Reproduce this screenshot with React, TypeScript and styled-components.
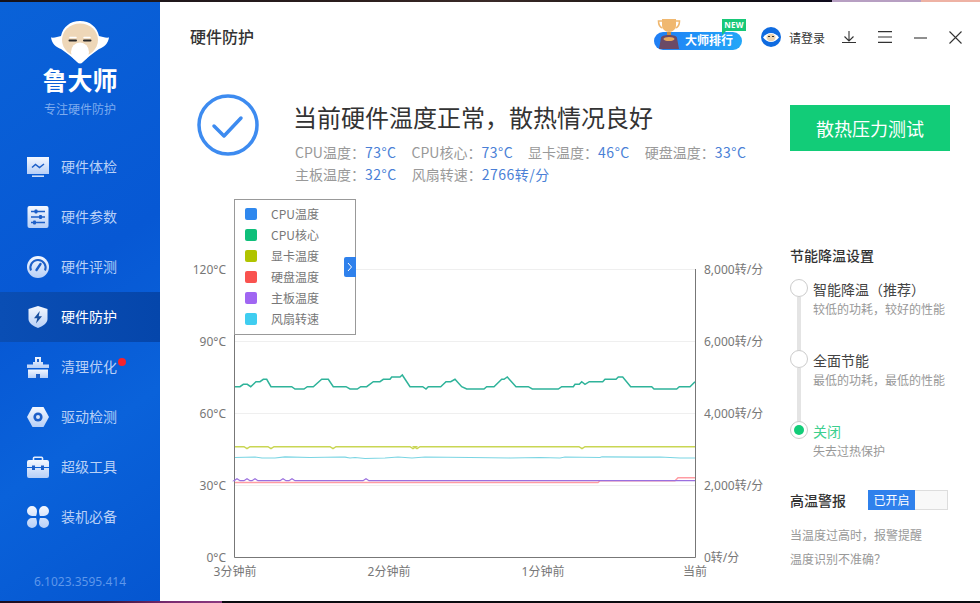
import React from 'react';
import styled, { createGlobalStyle } from 'styled-components';

const GlobalStyle = createGlobalStyle`
html, body {
	margin: 0;
	padding: 0;
	background: #ffffff;
	overflow: hidden;
}
body {
	font-family: "Noto Sans CJK SC", "Noto Sans", sans-serif;
}
`;

const Page = styled.div`
width: 980px;
height: 603px;
display: flex;
flex-flow: column nowrap;
overflow: hidden;
background: #fff;
`;

const Strip = styled.div<{ $height: number; $bg: string }>`
flex: 0 0 ${p => p.$height}px;
background: ${p => p.$bg};
`;

const Window = styled.div`
flex: 1;
display: flex;
min-height: 0;
`;

const Sidebar = styled.aside`
flex: 0 0 160px;
display: flex;
flex-flow: column nowrap;
background: linear-gradient(145deg, #0a62d8 0%, #0758d4 45%, #0a62da 70%, #0556d0 100%);
`;

const Brand = styled.div`
display: flex;
flex-flow: column nowrap;
align-items: center;
height: 140px;
padding-top: 18px;
box-sizing: border-box;
`;

const BrandName = styled.div`
font-size: 25px;
line-height: 30px;
font-weight: 700;
color: #fff;
margin-top: -1px;
`;

const BrandSlogan = styled.div`
font-size: 12px;
line-height: 16px;
color: #7dabee;
margin-top: 7px;
`;

const Nav = styled.nav`
display: flex;
flex-flow: column nowrap;
`;

const NavItem = styled.div<{ $active?: boolean }>`
position: relative;
height: 50px;
display: flex;
align-items: center;
gap: 12px;
padding-left: 27px;
font-size: 14px;
color: ${p => (p.$active ? '#ffffff' : '#b9d0f6')};
background: ${p => (p.$active ? 'linear-gradient(90deg, #0a4eb4, #0546ab)' : 'transparent')};
`;

const NavLabel = styled.span`
margin-top: -2px;
`;

const RedDot = styled.span`
position: absolute;
left: 118px;
top: 16px;
width: 8px;
height: 8px;
border-radius: 50%;
background: #f5222d;
`;

const Version = styled.div`
margin-top: auto;
margin-bottom: 11px;
text-align: center;
font-size: 12px;
line-height: 16px;
color: #5e97ea;
font-family: "Noto Sans", sans-serif;
`;

const Main = styled.main`
flex: 1;
min-width: 0;
display: flex;
flex-flow: column nowrap;
`;

const Header = styled.header`
height: 70px;
display: flex;
align-items: center;
padding: 0 18px 0 30px;
`;

const PageTitle = styled.h1`
margin: -2px 0 0;
font-size: 16px;
font-weight: 500;
color: #333;
`;

const HeaderTools = styled.div`
margin-left: auto;
display: flex;
align-items: center;
`;

const RankBadge = styled.div`
position: relative;
width: 88px;
height: 18px;
margin-right: 19px;
margin-top: 8px;
border-radius: 9px;
background: linear-gradient(90deg, #1f7ef5, #23a6f8);
color: #fff;
font-size: 12px;
line-height: 16px;
font-weight: 700;
box-sizing: border-box;
padding-left: 31px;
white-space: nowrap;
`;

const Trophy = styled.svg`
position: absolute;
left: 3px;
top: -13px;
`;

const NewTag = styled.span`
position: absolute;
left: 68px;
top: -13px;
width: 24px;
height: 12px;
background: #18c878;
color: #fff;
font-family: "Noto Sans", sans-serif;
font-size: 8px;
line-height: 12px;
font-weight: 700;
text-align: center;
letter-spacing: 0.3px;
&::after {
	content: '';
	position: absolute;
	left: 0;
	top: 12px;
	border-top: 4px solid #18c878;
	border-right: 4px solid transparent;
}
`;

const Login = styled.div`
display: flex;
align-items: center;
gap: 8px;
font-size: 12px;
color: #333;
margin-right: 17px;
`;

const ToolIcon = styled.svg`
display: block;
margin-left: 22px;
&:first-of-type {
	margin-left: 0;
}
`;

const Status = styled.section`
display: flex;
align-items: flex-start;
padding: 22px 30px 0 37px;
height: 123px;
box-sizing: border-box;
`;

const StatusText = styled.div`
margin-left: 34px;
flex: 1;
`;

const StatusTitle = styled.div`
font-size: 24px;
line-height: 36px;
color: #333;
margin: 5px 0 6px;
`;

const StatLine = styled.div`
display: flex;
font-size: 14px;
line-height: 22px;
color: #999;
padding-left: 2px;
`;

const Stat = styled.span`
margin-right: 15px;
white-space: nowrap;
`;

const StatValue = styled.span`
color: #4a7fd6;
letter-spacing: 0.5px;
`;

const StressButton = styled.button`
flex: 0 0 160px;
height: 46px;
margin-top: 11px;
border: 0;
padding: 0;
background: #12cc78;
color: #fff;
font-family: inherit;
font-size: 18px;
`;

const Body = styled.section`
flex: 1;
display: flex;
min-height: 0;
`;

const ChartBox = styled.div`
position: relative;
flex: 0 0 610px;
padding-left: 20px;
`;

const ChartSvg = styled.svg`
display: block;
font-family: "Noto Sans", "Noto Sans CJK SC", sans-serif;
font-size: 12px;
`;

const Legend = styled.ul`
position: absolute;
left: 74px;
top: 4px;
width: 122px;
height: 136px;
margin: 0;
padding: 3px 0 0 10px;
box-sizing: border-box;
list-style: none;
background: #fff;
border: 1px solid #999;
`;

const LegendItem = styled.li`
display: flex;
align-items: center;
height: 21px;
font-size: 12px;
color: #777;
`;

const Swatch = styled.span<{ $color: string }>`
flex: 0 0 12px;
height: 12px;
border-radius: 2px;
margin-right: 14px;
background: ${p => p.$color};
`;

const LegendTab = styled.span`
position: absolute;
right: -1px;
top: 57px;
width: 12px;
height: 20px;
border-radius: 2px 0 0 2px;
background: #2f81ec;
color: #fff;
display: flex;
align-items: center;
justify-content: center;
`;

const Settings = styled.div`
flex: 1;
display: flex;
flex-flow: column nowrap;
padding-top: 50px;
`;

const SectionTitle = styled.div`
font-size: 14px;
line-height: 20px;
font-weight: 500;
color: #333;
`;

const Options = styled.div`
margin-top: 14px;
`;

const Option = styled.div`
position: relative;
height: 71px;
padding-left: 23px;
box-sizing: border-box;
&:last-child {
	height: 50px;
}
&:not(:last-child)::after {
	content: '';
	position: absolute;
	left: 7px;
	top: 18px;
	width: 4px;
	height: 55px;
	background: #e4e4e4;
}
`;

const Radio = styled.span<{ $on?: boolean }>`
position: absolute;
left: 0;
top: 0;
width: 16px;
height: 16px;
border: 1px solid #ccc;
border-radius: 50%;
background: #fff;
&::after {
	content: '';
	display: ${p => (p.$on ? 'block' : 'none')};
	width: 10px;
	height: 10px;
	margin: 3px;
	border-radius: 50%;
	background: #12cc78;
}
`;

const OptionName = styled.div<{ $on?: boolean }>`
font-size: 14px;
line-height: 20px;
color: ${p => (p.$on ? '#3ccf8e' : '#444')};
`;

const OptionHint = styled.div`
font-size: 12px;
line-height: 20px;
color: #999;
`;

const AlarmRow = styled.div`
display: flex;
align-items: center;
margin-top: 19px;
height: 20px;
`;

const Switch = styled.div`
width: 80px;
height: 20px;
margin-left: 22px;
display: flex;
box-sizing: border-box;
border: 1px solid #ddd;
background: #f8f8f8;
`;

const SwitchOn = styled.span`
margin: -1px 0 -1px -1px;
width: 47px;
background: #2f81ec;
color: #fff;
font-size: 12px;
line-height: 20px;
text-align: center;
`;

const Hint = styled.div<{ $gap: number }>`
font-size: 12px;
line-height: 20px;
color: #999;
margin-top: ${p => p.$gap}px;
`;

const iconGrad = (
	<defs>
		<linearGradient id="navIcon" x1="0" y1="0" x2="0" y2="1">
			<stop offset="0" stopColor="#f4f8ff" />
			<stop offset="1" stopColor="#b7cff7" />
		</linearGradient>
	</defs>
);

const NavSvg = (props: { children: React.ReactNode }) => (
	<svg width="22" height="22" viewBox="0 0 22 22" style={{ flex: '0 0 22px' }}>
		{props.children}
	</svg>
);

const icons: Record<string, React.ReactNode> = {
	monitor: (
		<NavSvg>
			<path fill="url(#navIcon)" d="M0 1h22v17H0z" />
			<path fill="url(#navIcon)" d="M5 19.500h12v1.500H5z" />
			<path fill="none" stroke="#1d5fc8" strokeWidth="1.5" d="M5 11.500l3.500-3 4 3 4.500-3.500" />
		</NavSvg>
	),
	sliders: (
		<NavSvg>
			<rect fill="url(#navIcon)" x="0.5" y="0" width="21" height="22" rx="2" />
			<g stroke="#1d5fc8" strokeWidth="1.4">
				<path d="M4 5.500h14M4 11h14M4 16.500h14" />
			</g>
			<g fill="#1d5fc8">
				<rect x="7.500" y="3.500" width="3" height="4" rx="1" />
				<rect x="12" y="9" width="3" height="4" rx="1" />
				<rect x="6" y="14.500" width="3" height="4" rx="1" />
			</g>
		</NavSvg>
	),
	gauge: (
		<NavSvg>
			<circle fill="url(#navIcon)" cx="11" cy="11" r="11" />
			<path fill="none" stroke="#1d5fc8" strokeWidth="2" d="M4 14.500a7.600 7.600 0 1 1 14 0" />
			<path stroke="#1d5fc8" strokeWidth="2.400" strokeLinecap="round" d="M9.500 14l4-6" />
		</NavSvg>
	),
	shield: (
		<NavSvg>
			<path fill="url(#navIcon)" d="M11 0l9.500 3v10c0 4-5 7.500-9.500 9-4.500-1.500-9.500-5-9.500-9V3z" />
			<path fill="#184f9f" d="M12.800 5L7 12.300h3.300L9 17.500l6-7.300h-3.300z" />
		</NavSvg>
	),
	broom: (
		<NavSvg>
			<path fill="url(#navIcon)" d="M8 1h6v5h2v2.500h6V12H0V8.500h6V6h2z" />
			<path fill="url(#navIcon)" d="M1 13.500h20V22H1z" />
			<path fill="#1d5fc8" d="M10 3h2v3h-2zM9 18h4v4H9z" />
		</NavSvg>
	),
	nut: (
		<NavSvg>
			<path fill="url(#navIcon)" d="M5.500 1h11L22 11l-5.500 10h-11L0 11z" />
			<circle fill="#1d5fc8" cx="11" cy="11" r="4.600" />
			<circle fill="#dbe7fb" cx="11" cy="11" r="2" />
		</NavSvg>
	),
	toolbox: (
		<NavSvg>
			<path fill="none" stroke="#e4edfd" strokeWidth="1.600" d="M6.500 5V2.200a1 1 0 0 1 1-1h7a1 1 0 0 1 1 1V5" />
			<path fill="url(#navIcon)" d="M2 4h18a2 2 0 0 1 2 2v5H0V6a2 2 0 0 1 2-2zM0 12h22v8a2 2 0 0 1-2 2H2a2 2 0 0 1-2-2z" />
			<path fill="#1d5fc8" d="M5 9.500h3v4.500H5zM14 9.500h3v4.500h-3z" />
		</NavSvg>
	),
	clover: (
		<NavSvg>
			<path fill="url(#navIcon)" d="M5 0a5 5 0 0 1 5 5c0 3-1 5-1 5s-1.500 0-4 0a5 5 0 0 1 0-10zM17 0a5 5 0 0 1 0 10c-2.500 0-4 0-4 0s-1-2-1-5a5 5 0 0 1 5-5zM5 22a5 5 0 0 1 0-10c2.500 0 4 0 4 0s1 2 1 5a5 5 0 0 1-5 5zM17 22a5 5 0 0 1-5-5c0-3 1-5 1-5s1.500 0 4 0a5 5 0 0 1 0 10z" />
		</NavSvg>
	),
};

const navItems = [
	{ label: '硬件体检', icon: 'monitor' },
	{ label: '硬件参数', icon: 'sliders' },
	{ label: '硬件评测', icon: 'gauge' },
	{ label: '硬件防护', icon: 'shield', active: true },
	{ label: '清理优化', icon: 'broom', dot: true },
	{ label: '驱动检测', icon: 'nut' },
	{ label: '超级工具', icon: 'toolbox' },
	{ label: '装机必备', icon: 'clover' },
];

const legend = [
	{ label: 'CPU温度', color: '#2f88ee' },
	{ label: 'CPU核心', color: '#0fbf7a' },
	{ label: '显卡温度', color: '#b0c400' },
	{ label: '硬盘温度', color: '#f9524f' },
	{ label: '主板温度', color: '#a066f2' },
	{ label: '风扇转速', color: '#3fcdf0' },
];

// traced from the reference, x/y in 3x crop coordinates of the two chart halves
const tealLeft: [number, number][] = [[15,65],[30,65],[40,58],[52,58],[62,65],[78,50],[90,50],[100,43],[110,43],[123,65],[185,65],[195,72],[222,72],[232,65],[250,65],[275,43],[295,43],[310,65],[348,65],[360,72],[382,72],[392,65],[410,65],[430,50],[450,50],[460,43],[480,43],[485,36],[510,36],[517,30],[540,65],[578,65],[588,72],[595,65],[632,65],[648,50],[662,50],[675,43],[695,65],[710,72],[720,72]];
const tealRight: [number, number][] = [[42,72],[50,65],[72,65],[95,43],[102,43],[112,36],[138,65],[175,65],[187,72],[265,72],[275,65],[310,65],[315,58],[328,58],[335,50],[345,58],[358,50],[398,50],[405,43],[438,43],[445,36],[458,36],[482,65],[545,65],[552,72],[620,72],[628,65],[660,65],[675,50]];

const teal = [
	...tealLeft.map(([x, y]) => [230 + x / 3, 365 + y / 3]),
	...tealRight.map(([x, y]) => [470 + x / 3, 365 + y / 3]),
];

const toPath = (pts: number[][]) => pts.map(([x, y], i) => `${i ? 'L' : 'M'}${x.toFixed(1)} ${y.toFixed(1)}`).join(' ');

// flat line with small notches at the given page x positions
const notched = (y: number, notches: number[], depth: number, end = 695) => {
	const pts: number[][] = [[235, y]];
	notches.forEach(n => {
		pts.push([n - 3, y], [n, y + depth], [n + 3, y]);
	});
	pts.push([end, y]);
	return pts;
};

const yellow = notched(446.7, [247, 271, 333, 413, 417, 582], 2);
const purple = notched(480.7, [237, 247, 255, 283, 292, 366], -2);
const pink = [[235, 482.5], [598, 482.5], [600, 480.7], [675, 480.7], [678, 477.7], [695, 477.7]];
const cyan = [[235,457.5],[255,457],[262,458],[275,458],[285,456.8],[310,457.5],[340,457],[345,457.2],[350,458],[355,457.5],[365,458.5],[385,458],[398,457],[412,458],[425,457],[470,457.5],[510,458],[540,457.5],[560,458],[565,457],[600,457.5],[602,456.8],[640,457.2],[660,457],[680,458],[695,458]];

const gridYs = [269, 341, 413, 485];
const leftTicks = [['120°C', 269], ['90°C', 341], ['60°C', 413], ['30°C', 485], ['0°C', 557]] as const;
const rightTicks = [['8,000转/分', 269], ['6,000转/分', 341], ['4,000转/分', 413], ['2,000转/分', 485], ['0转/分', 557]] as const;
const xTicks = [['3分钟前', 235], ['2分钟前', 389], ['1分钟前', 543], ['当前', 695]] as const;

const Chart = () => (
	<ChartSvg width="600" height="395" viewBox="180 195 600 395">
		{gridYs.map(y => <line key={y} x1="235" x2="695" y1={y + 0.5} y2={y + 0.5} stroke="#efefef" />)}
		<path d="M234.500 199V557.500H695.500V269" fill="none" stroke="#777" />
		<path d={toPath(cyan)} fill="none" stroke="#7ad5e3" strokeWidth="1.200" />
		<path d={toPath(yellow)} fill="none" stroke="#c9d653" strokeWidth="1.400" />
		<path d={toPath(pink)} fill="none" stroke="#ff9ca3" strokeWidth="1.400" />
		<path d={toPath(purple)} fill="none" stroke="#9a6fdf" strokeWidth="1.200" />
		<path d={toPath(teal)} fill="none" stroke="#2fb39a" strokeWidth="1.500" />
		{leftTicks.map(([t, y]) => <text key={t} x="226" y={y + 5} textAnchor="end" fill="#777">{t}</text>)}
		{rightTicks.map(([t, y]) => <text key={t} x="704" y={y + 5} fill="#777">{t}</text>)}
		{xTicks.map(([t, x]) => <text key={t} x={x} y="576" textAnchor="middle" fill="#777">{t}</text>)}
	</ChartSvg>
);

const BrandLogo = () => (
	<svg width="60" height="45" viewBox="0 0 60 45">
		<path fill="#fff" d="M30 1C40 1 47 7 49 16C52 17 56 18 59 17.500C58 24 54 27 49 29C43 33 37 38 33 42C31 44 29 44 27 42C23 38 17 33 11 29C6 27 2 24 1 17.500C4 18 8 17 11 16C13 7 20 1 30 1Z" />
		<ellipse fill="#eed7b8" cx="30" cy="20" rx="18" ry="16.500" />
		<ellipse fill="#fff" cx="30" cy="32" rx="9" ry="9.500" />
		<path fill="none" stroke="#2a2a2a" strokeWidth="2" strokeLinecap="round" d="M19.500 20.500h6.500M34 20.500h6.500" />
		<path fill="none" stroke="#fff" strokeWidth="1.500" strokeLinecap="round" d="M20 17.500h6M34 17.500h6" />
	</svg>
);

const CheckBadge = () => (
	<svg width="62" height="62" viewBox="0 0 62 62" style={{ flex: '0 0 62px' }}>
		<circle cx="31" cy="31" r="29" fill="none" stroke="#3d8bf0" strokeWidth="3.500" />
		<path d="M17 32l10 10 17-18" fill="none" stroke="#3d8bf0" strokeWidth="3.500" strokeLinecap="round" strokeLinejoin="round" />
	</svg>
);

const App = () => (
	<Page>
		<GlobalStyle />
		<svg width="0" height="0" style={{ position: 'absolute' }}>{iconGrad}</svg>
		<Strip $height={2} $bg="linear-gradient(90deg, #15121a 0%, #2a1d1c 35%, #3a2a28 50%, #15120f 70%, #0e0a1c 84.9%, #b79fc2 84.9% 94%, #eeb2a4 94%)" />
		<Window>
			<Sidebar>
				<Brand>
					<BrandLogo />
					<BrandName>鲁大师</BrandName>
					<BrandSlogan>专注硬件防护</BrandSlogan>
				</Brand>
				<Nav>
					{navItems.map(item => (
						<NavItem key={item.label} $active={item.active}>
							{icons[item.icon]}
							<NavLabel>{item.label}</NavLabel>
							{item.dot && <RedDot />}
						</NavItem>
					))}
				</Nav>
				<Version>6.1023.3595.414</Version>
			</Sidebar>
			<Main>
				<Header>
					<PageTitle>硬件防护</PageTitle>
					<HeaderTools>
						<RankBadge>
							<Trophy width="24" height="30" viewBox="0 0 24 30">
								<path fill="#f0b870" d="M5 0h14v6c0 4-3 7-7 7S5 10 5 6z" />
								<path fill="none" stroke="#f0b870" strokeWidth="1.600" d="M5 2H1.500c0 4 1 6 4 7M19 2h3.500c0 4-1 6-4 7" />
								<path fill="#c98a3e" d="M10 13h4v3h-4z" />
								<path fill="#6b4a66" d="M4 19c0-2 3.500-3 8-3s8 1 8 3l2 11H2z" />
								<ellipse fill="#e8a85a" cx="12" cy="20" rx="5.500" ry="2" />
							</Trophy>
							大师排行
							<NewTag>NEW</NewTag>
						</RankBadge>
						<Login>
							<svg width="20" height="20" viewBox="0 0 20 20">
								<circle cx="10" cy="10" r="10" fill="#0f6be0" />
								<path d="M2 10.500C4 7.500 7 6 10 6s6 1.500 8 4.500c-2 2.500-5 4.500-8 4.500s-6-2-8-4.500z" fill="#fff" />
								<ellipse cx="10" cy="10.500" rx="4.500" ry="3.800" fill="#ecd3b0" />
								<path d="M7 9.500h2M11 9.500h2" stroke="#333" strokeWidth="1" />
							</svg>
							请登录
						</Login>
						<ToolIcon width="14" height="12" viewBox="0 0 14 12">
							<path d="M7 0v10M2.500 5.500L7 10l4.500-4.500M0 11.500h14" fill="none" stroke="#333" strokeWidth="1.100" />
						</ToolIcon>
						<ToolIcon width="14" height="12" viewBox="0 0 14 12">
							<path d="M0 .6h14M0 6h14M0 11.400h14" fill="none" stroke="#333" strokeWidth="1.100" />
						</ToolIcon>
						<ToolIcon width="13" height="13" viewBox="0 0 13 13">
							<path d="M0 7h13" fill="none" stroke="#333" strokeWidth="1.100" />
						</ToolIcon>
						<ToolIcon width="13" height="13" viewBox="0 0 13 13">
							<path d="M.5.500l12 12M12.500.500l-12 12" fill="none" stroke="#333" strokeWidth="1.100" />
						</ToolIcon>
					</HeaderTools>
				</Header>
				<Status>
					<CheckBadge />
					<StatusText>
						<StatusTitle>当前硬件温度正常，散热情况良好</StatusTitle>
						<StatLine>
							<Stat>CPU温度：<StatValue>73°C</StatValue></Stat>
							<Stat>CPU核心：<StatValue>73°C</StatValue></Stat>
							<Stat>显卡温度：<StatValue>46°C</StatValue></Stat>
							<Stat>硬盘温度：<StatValue>33°C</StatValue></Stat>
						</StatLine>
						<StatLine>
							<Stat>主板温度：<StatValue>32°C</StatValue></Stat>
							<Stat>风扇转速：<StatValue>2766转/分</StatValue></Stat>
						</StatLine>
					</StatusText>
					<StressButton>散热压力测试</StressButton>
				</Status>
				<Body>
					<ChartBox>
						<Chart />
						<Legend>
							{legend.map(item => (
								<LegendItem key={item.label}>
									<Swatch $color={item.color} />
									{item.label}
								</LegendItem>
							))}
							<LegendTab>
								<svg width="6" height="10" viewBox="0 0 6 10">
									<path d="M1 1l3.500 4L1 9" fill="none" stroke="#fff" />
								</svg>
							</LegendTab>
						</Legend>
					</ChartBox>
					<Settings>
						<SectionTitle>节能降温设置</SectionTitle>
						<Options>
							<Option>
								<Radio />
								<OptionName>智能降温（推荐）</OptionName>
								<OptionHint>较低的功耗，较好的性能</OptionHint>
							</Option>
							<Option>
								<Radio />
								<OptionName>全面节能</OptionName>
								<OptionHint>最低的功耗，最低的性能</OptionHint>
							</Option>
							<Option>
								<Radio $on />
								<OptionName $on>关闭</OptionName>
								<OptionHint>失去过热保护</OptionHint>
							</Option>
						</Options>
						<AlarmRow>
							<SectionTitle>高温警报</SectionTitle>
							<Switch><SwitchOn>已开启</SwitchOn></Switch>
						</AlarmRow>
						<Hint $gap={15}>当温度过高时，报警提醒</Hint>
						<Hint $gap={4}>温度识别不准确？</Hint>
					</Settings>
				</Body>
			</Main>
		</Window>
		<Strip $height={2} $bg="linear-gradient(90deg, #1a0d20 0, #3a1538 106px, #7a2a70 170px, #8a3a80 222px, #0b0b10 222px)" />
	</Page>
);

export default App;
